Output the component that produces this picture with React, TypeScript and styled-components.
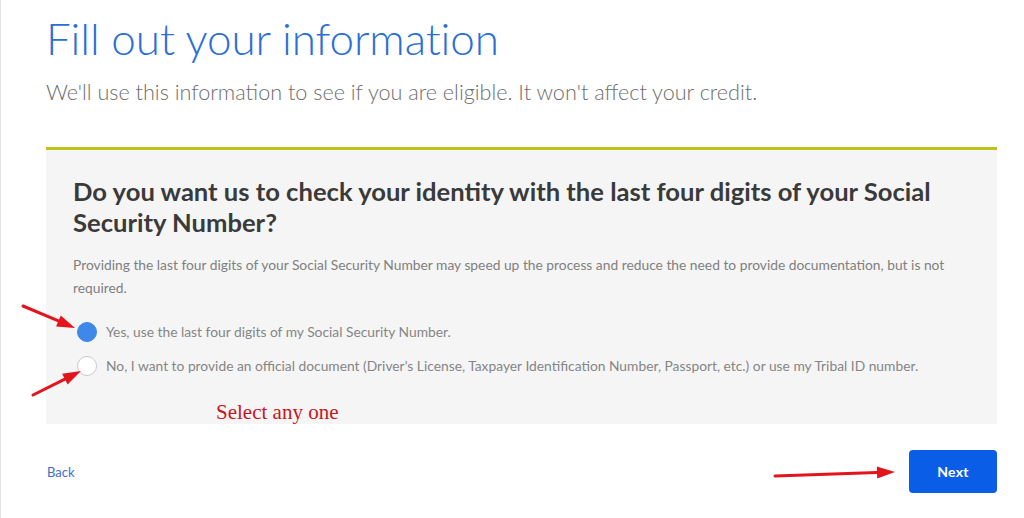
import React, { useState } from 'react';
import styled, { createGlobalStyle } from 'styled-components';

const GlobalStyle = createGlobalStyle`
  html, body {
    margin: 0;
    padding: 0;
    background: #ffffff;
  }
  body {
    font-family: 'Lato', 'Open Sans', sans-serif;
  }
`;

const Page = styled.div`
  position: relative;
  width: 1024px;
  height: 518px;
  box-sizing: border-box;
  border-left: 1px solid #e2e2e2;
  padding: 0 27px 0 45px;
  overflow: hidden;
`;

const Title = styled.h1`
  margin: 0;
  padding-top: 12px;
  font-weight: 300;
  font-size: 44px;
  line-height: 52px;
  color: #2a6fd6;
  letter-spacing: -0.1px;
`;

const Subtitle = styled.p`
  margin: 13px 0 0;
  font-weight: 300;
  font-size: 21.6px;
  line-height: 30px;
  color: #6e6e6e;
`;

const Card = styled.section`
  margin-top: 40px;
  background: #f5f5f5;
  border-top: 3px solid #bfc21b;
  padding: 26px 27px 0;
`;

const Question = styled.h2`
  margin: 0;
  font-weight: 700;
  font-size: 25.6px;
  line-height: 31px;
  color: #3a3a3a;
`;

const Help = styled.p`
  margin: 15px 0 0;
  font-size: 13.8px;
  line-height: 23px;
  color: #808080;
`;

const Options = styled.div`
  margin: 23px 0 0 4px;
  display: flex;
  flex-direction: column;
  gap: 14px;
`;

const Option = styled.label`
  display: flex;
  align-items: center;
  gap: 9px;
  font-size: 13.8px;
  line-height: 20px;
  color: #858585;
  cursor: pointer;
`;

const Radio = styled.span<{ $checked: boolean }>`
  width: 20px;
  height: 20px;
  border-radius: 50%;
  box-sizing: border-box;
  flex: none;
  background: ${p => (p.$checked ? '#3d88ea' : '#ffffff')};
  border: 1px solid ${p => (p.$checked ? '#3d88ea' : '#c9c9c9')};
`;

const Note = styled.div`
  margin: 24px 0 0 143px;
  font-family: 'Liberation Serif', serif;
  font-size: 21px;
  line-height: 24px;
  color: #c8141b;
`;

const Footer = styled.div`
  display: flex;
  align-items: center;
  justify-content: space-between;
  margin-top: 26px;
`;

const BackLink = styled.a`
  font-size: 13px;
  color: #3f6dca;
  text-decoration: none;
  margin-left: 1px;
`;

const NextButton = styled.button`
  width: 88px;
  height: 43px;
  border: none;
  border-radius: 4px;
  background: #0a5de6;
  color: #ffffff;
  font-family: 'Lato', sans-serif;
  font-weight: 700;
  font-size: 14px;
  letter-spacing: 0.3px;
`;

const Annotations = styled.svg`
  position: absolute;
  left: 0;
  top: 0;
  pointer-events: none;
`;

const options = [
  'Yes, use the last four digits of my Social Security Number.',
  "No, I want to provide an official document (Driver's License, Taxpayer Identification Number, Passport, etc.) or use my Tribal ID number.",
];

function Arrow({ x1, y1, x2, y2 }: { x1: number; y1: number; x2: number; y2: number }) {
  const a = Math.atan2(y2 - y1, x2 - x1);
  const len = 18;
  const w = 6;
  const bx = x2 - len * Math.cos(a);
  const by = y2 - len * Math.sin(a);
  const px = -Math.sin(a) * w;
  const py = Math.cos(a) * w;
  return (
    <g>
      <line x1={x1} y1={y1} x2={bx} y2={by} stroke="#e3141b" strokeWidth={3} strokeLinecap="round" />
      <polygon points={`${x2},${y2} ${bx + px},${by + py} ${bx - px},${by - py}`} fill="#e3141b" />
    </g>
  );
}

export default function App() {
  const [choice, setChoice] = useState(0);
  return (
    <>
      <GlobalStyle />
      <Page>
        <Title>Fill out your information</Title>
        <Subtitle>We'll use this information to see if you are eligible. It won't affect your credit.</Subtitle>
        <Card>
          <Question>
            Do you want us to check your identity with the last four digits of your Social Security Number?
          </Question>
          <Help>
            Providing the last four digits of your Social Security Number may speed up the process and reduce the
            need to provide documentation, but is not required.
          </Help>
          <Options>
            {options.map((text, i) => (
              <Option key={i} onClick={() => setChoice(i)}>
                <Radio $checked={choice === i} />
                {text}
              </Option>
            ))}
          </Options>
          <Note>Select any one</Note>
        </Card>
        <Footer>
          <BackLink href="#">Back</BackLink>
          <NextButton>Next</NextButton>
        </Footer>
        <Annotations width={1024} height={518}>
          <Arrow x1={22} y1={306} x2={74} y2={328} />
          <Arrow x1={32} y1={395} x2={80} y2={371} />
          <Arrow x1={774} y1={476} x2={894} y2={472} />
        </Annotations>
      </Page>
    </>
  );
}
